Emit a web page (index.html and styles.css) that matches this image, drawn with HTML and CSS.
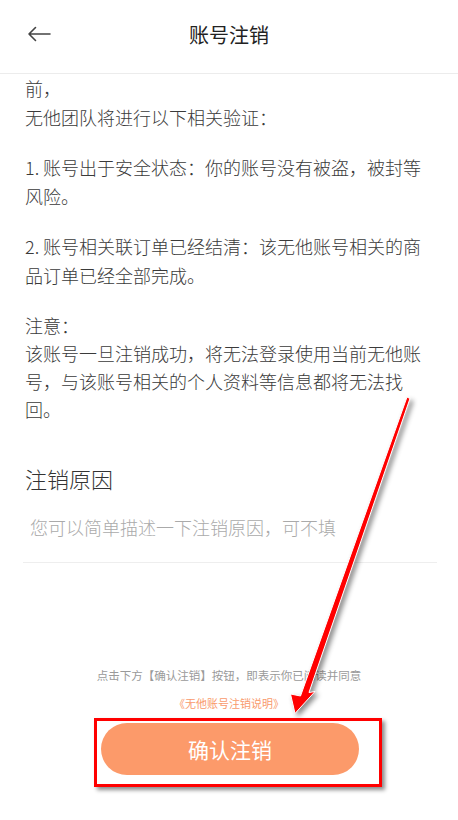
FILE: index.html
```html
<!DOCTYPE html>
<html lang="zh-CN">
<head>
<meta charset="utf-8">
<title>账号注销</title>
<link rel="stylesheet" href="styles.css">
</head>
<body>
<div class="page">
  <header class="topbar">
    <svg class="back" width="24" height="16" viewBox="0 0 24 16">
      <path d="M23 8H2M8.5 1.5L2 8l6.5 6.5" fill="none" stroke="#444" stroke-width="1.6" stroke-linecap="round" stroke-linejoin="round"/>
    </svg>
    <h1 class="title">账号注销</h1>
  </header>
  <main class="content">
    <p class="para">前，<br>无他团队将进行以下相关验证：</p>
    <p class="para">1. 账号出于安全状态：你的账号没有被盗，被封等风险。</p>
    <p class="para">2. 账号相关联订单已经结清：该无他账号相关的商品订单已经全部完成。</p>
    <p class="para para-note">注意：<br>该账号一旦注销成功，将无法登录使用当前无他账号，与该账号相关的个人资料等信息都将无法找回。</p>
  </main>
  <section class="reason">
    <h2 class="reason-title">注销原因</h2>
    <div class="reason-input">您可以简单描述一下注销原因，可不填</div>
  </section>
  <footer class="footer">
    <p class="agree">点击下方【确认注销】按钮，即表示你已阅读并同意</p>
    <p class="agree-link">《无他账号注销说明》</p>
    <button class="confirm">确认注销</button>
  </footer>
  <div class="highlight"></div>
  <svg class="arrow" width="458" height="820" viewBox="0 0 458 820">
    <polygon points="407,397 410,398.5 309,692.5 315,691.5 295,713.5 290.5,694 300.5,696" fill="#ff0000" stroke="#ffffff" stroke-width="1" stroke-linejoin="miter"/>
  </svg>
</div>
</body>
</html>
```

FILE: styles.css
```css
html, body {
  margin: 0;
  padding: 0;
  background: #ffffff;
}
body {
  font-family: "Noto Sans CJK SC", "Noto Sans", sans-serif;
  color: #333333;
}
.page {
  position: relative;
  width: 458px;
  height: 820px;
  overflow: hidden;
}
.topbar {
  position: relative;
  height: 73px;
  border-bottom: 1px solid #ececec;
  display: flex;
  align-items: center;
  justify-content: center;
}
.back {
  position: absolute;
  left: 27px;
  top: 26px;
}
.title {
  margin: 0 0 4px;
  font-size: 20px;
  font-weight: 400;
  color: #222222;
  line-height: 30px;
}
.content {
  padding: 0 25px;
}
.para {
  margin: 0 0 21px;
  font-size: 18px;
  font-weight: 300;
  line-height: 29px;
  color: #3a3a3a;
}
.para-note {
  line-height: 28px;
  margin-bottom: 0;
}
.reason {
  margin: 40px 21px 0 23px;
  border-bottom: 1px solid #eeeeee;
  padding-bottom: 22px;
}
.reason-title {
  margin: 0;
  padding-left: 2px;
  font-size: 22px;
  font-weight: 300;
  line-height: 30px;
  color: #333333;
}
.reason-input {
  margin-top: 21px;
  padding-left: 7px;
  font-size: 18px;
  font-weight: 300;
  line-height: 26px;
  color: #aaaaaa;
}
.footer {
  margin-top: 103px;
  display: flex;
  flex-direction: column;
  align-items: center;
}
.agree {
  margin: 0;
  font-size: 11.5px;
  line-height: 18px;
  color: #9a9a9a;
}
.agree-link {
  margin: 10px 0 0;
  font-size: 11px;
  line-height: 18px;
  color: #f99a6c;
}
.confirm {
  margin-top: 11px;
  margin-left: 2px;
  width: 258px;
  height: 52px;
  border: none;
  border-radius: 26px;
  background: #fc9a6a;
  color: #ffffff;
  font-family: "Noto Sans CJK SC", "Noto Sans", sans-serif;
  font-size: 21px;
  font-weight: 400;
  line-height: 52px;
  padding: 0;
}
.highlight {
  position: absolute;
  left: 94px;
  top: 718px;
  width: 282px;
  height: 63px;
  border: 3px solid #ff0000;
  box-shadow: 3px 3px 4px rgba(0, 0, 0, 0.45);
}
.arrow {
  position: absolute;
  left: 0;
  top: 0;
  pointer-events: none;
  filter: drop-shadow(3px 3px 2.5px rgba(0, 0, 0, 0.45));
}
```
